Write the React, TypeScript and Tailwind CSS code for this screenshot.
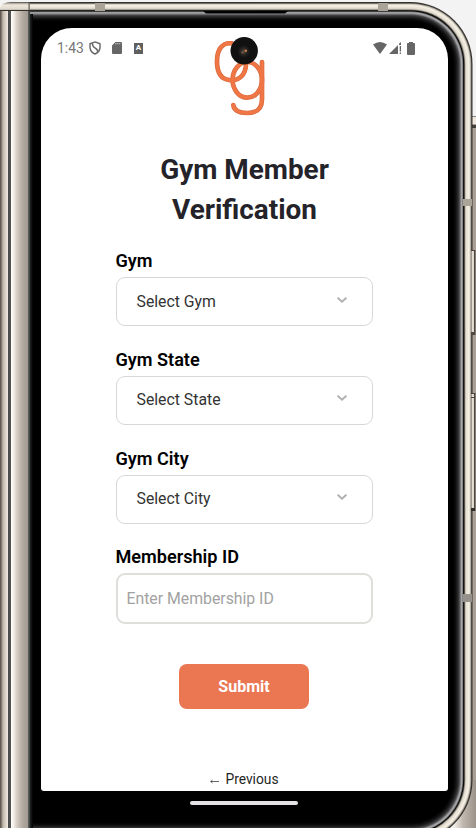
import React from "react";

const rings: [number, string][] = [
  [0, "#34322f"],
  [1.2, "#8d887f"],
  [2, "#d9d3c7"],
  [3, "#f4efe3"],
  [4.6, "#e9e2d6"],
  [6.5, "#cfc8bb"],
  [7.4, "#77736a"],
  [8.2, "#090909"],
  [9.4, "#77777a"],
  [10.2, "#aaaaac"],
  [11.3, "#8a8a8c"],
  [12.2, "#5c5c5e"],
  [13.1, "#3e3e40"],
  [14, "#2c2c2d"],
  [15, "#1e1e1f"],
  [16, "#131313"],
  [17, "#090909"],
  [18.5, "#000000"],
];

function DeviceFrame() {
  return (
    <svg className="absolute inset-0" width="476" height="828" viewBox="0 0 476 828">
      <defs>
        <linearGradient id="hinge" x1="0" y1="0" x2="31" y2="0" gradientUnits="userSpaceOnUse">
          <stop offset="0" stopColor="#514843" />
          <stop offset="0.05" stopColor="#887e75" />
          <stop offset="0.1" stopColor="#c2b8ac" />
          <stop offset="0.19" stopColor="#ded5c9" />
          <stop offset="0.25" stopColor="#eee8df" />
          <stop offset="0.255" stopColor="#494949" />
          <stop offset="0.35" stopColor="#545454" />
          <stop offset="0.355" stopColor="#ffffff" />
          <stop offset="0.43" stopColor="#f6f1eb" />
          <stop offset="0.54" stopColor="#d7cec5" />
          <stop offset="0.72" stopColor="#b3aba1" />
          <stop offset="0.89" stopColor="#a39b92" />
          <stop offset="0.91" stopColor="#62605c" />
          <stop offset="0.95" stopColor="#414746" />
          <stop offset="1" stopColor="#202323" />
        </linearGradient>
        <linearGradient id="cap" x1="0" y1="2" x2="0" y2="12" gradientUnits="userSpaceOnUse">
          <stop offset="0" stopColor="#403d39" />
          <stop offset="0.12" stopColor="#aaa398" />
          <stop offset="0.3" stopColor="#eee8dc" />
          <stop offset="0.7" stopColor="#e0d8cc" />
          <stop offset="0.82" stopColor="#b4aca0" />
          <stop offset="0.85" stopColor="#302e2b" />
          <stop offset="1" stopColor="#302e2b" />
        </linearGradient>
        <linearGradient id="edge" x1="29" y1="0" x2="33" y2="0" gradientUnits="userSpaceOnUse">
          <stop offset="0" stopColor="#4d5352" />
          <stop offset="0.3" stopColor="#202323" />
          <stop offset="1" stopColor="#000000" />
        </linearGradient>
        <linearGradient id="key" x1="471" y1="0" x2="476" y2="0" gradientUnits="userSpaceOnUse">
          <stop offset="0" stopColor="#6d675e" />
          <stop offset="0.25" stopColor="#e6dfd3" />
          <stop offset="0.6" stopColor="#dbd3c7" />
          <stop offset="0.72" stopColor="#302e2b" />
          <stop offset="0.9" stopColor="#807a72" />
          <stop offset="1" stopColor="#aaa098" />
        </linearGradient>
        <linearGradient id="corner" x1="454" y1="0" x2="476" y2="0" gradientUnits="userSpaceOnUse">
          <stop offset="0" stopColor="#f1eee9" />
          <stop offset="0.4" stopColor="#c1b9b0" />
          <stop offset="1" stopColor="#9b9289" />
        </linearGradient>
      </defs>
      <rect width="476" height="828" fill="#f3f3f3" />
      <rect x="466" y="116" width="10" height="712" fill="#aaa098" />
      <rect x="452" y="780" width="24" height="48" fill="url(#corner)" />
      <rect x="471" y="116" width="5" height="1" fill="#888" />
      <rect x="471" y="117" width="5" height="7" fill="#eee8de" />
      <rect x="471" y="125" width="5" height="3" fill="#45413d" />
      {rings.map(([inset, fill]) => (
        <rect
          key={inset}
          x={-100}
          y={2 + inset}
          width={572.5 - inset}
          height={840 - inset * 2}
          rx={62 - inset}
          fill={fill}
        />
      ))}
      <path d="M203 11H288L285 13.5H206Z" fill="#000" />
      <rect x="29" y="14" width="4" height="814" fill="url(#edge)" />
      <rect x="0" y="0" width="30" height="12" fill="#f3f3f3" />
      <path d="M0 8Q2 2 11 2H30V12H0Z" fill="url(#cap)" />
      <rect x="0" y="11" width="30" height="817" fill="url(#hinge)" />
      <rect x="28.6" y="2" width="1" height="10" fill="#44413c" />
      <rect x="95" y="3" width="10" height="8" fill="#aaa398" />
      <rect x="378" y="3" width="10" height="8" fill="#aaa398" />
      <rect x="463" y="199" width="9" height="7" fill="#aaa398" />
      <rect x="463" y="594" width="9" height="8" fill="#96918a" />
      <rect x="471" y="250" width="5" height="85" fill="url(#key)" />
      <rect x="471" y="332" width="4" height="3" fill="#4b4741" />
      <rect x="471" y="250" width="4" height="1" fill="#45413c" />
      <rect x="471" y="393" width="5" height="118" fill="url(#key)" />
      <rect x="471" y="393" width="4" height="1" fill="#45413c" />
      <rect x="471" y="397" width="4" height="1" fill="#45413c" />
      <rect x="471" y="508" width="4" height="3" fill="#302e2a" />
    </svg>
  );
}

function StatusBar() {
  return (
    <header className="flex h-10 shrink-0 items-center justify-between pl-4 pr-8 text-[#666]">
      <div className="flex items-center">
        <span className="w-[32px] text-[13.9px] leading-4 text-[#777]">1:43</span>
        <svg width="12" height="14" viewBox="0 0 12 14" fill="none" stroke="currentColor" strokeWidth="1.4">
          <path d="M6 .9 11 2.8V6.6Q10.7 11 6 13Q1.3 11 1 6.6V2.8Z" />
          <path d="M3.4 2.2Q3.4 5.6 6.3 7.1T8.4 11" />
        </svg>
        <svg className="ml-[11px]" width="10" height="12" viewBox="0 0 10 12" fill="currentColor">
          <path fillRule="evenodd" d="M3.4 0H9Q10 0 10 1V11Q10 12 9 12H1Q0 12 0 11V3.4ZM3.4 1.3V2.3H4.3V1.3ZM5.4 1.3V2.3H6.3V1.3ZM7.4 1.3V2.3H8.3V1.3Z" />
        </svg>
        <span className="ml-3 flex h-[11px] w-[9px] items-center justify-center bg-[#5f5f5f] text-[8px] font-bold leading-none text-white">A</span>
      </div>
      <div className="flex items-center">
        <svg width="14" height="12" viewBox="0 0 14 12" fill="currentColor">
          <path d="M0 2.6Q7-2.6 14 2.6L7 12Z" />
        </svg>
        <svg className="ml-0.5" width="13" height="12" viewBox="0 0 13 12" fill="currentColor">
          <path d="M0 12 9 3V12ZM10 1.7 12 0V3H10ZM10.7 4H12V9.5H10.7ZM10.7 10.5H12V12H10.7Z" />
        </svg>
        <svg className="ml-[5px] mr-px" width="8" height="13" viewBox="0 0 8 13" fill="currentColor">
          <path d="M2 1V0H6V1H7Q8 1 8 2V12Q8 13 7 13H1Q0 13 0 12V2Q0 1 1 1Z" />
        </svg>
      </div>
    </header>
  );
}

function Logo() {
  return (
    <svg className="absolute left-[172px] top-[7px]" width="54" height="84" viewBox="213 35 54 84">
      <defs>
        <radialGradient id="lens">
          <stop offset="0" stopColor="#5f4b3c" />
          <stop offset="0.3" stopColor="#3a302a" />
          <stop offset="0.55" stopColor="#252321" />
          <stop offset="1" stopColor="#111111" />
        </radialGradient>
      </defs>
      <g fill="none" strokeLinecap="round">
        <g stroke="#d96b40" strokeWidth="4.7">
          <path d="M232 43.4C222 42 217 50 217 61C217 72 221 79 229 80C238 82 246 75 246 64" />
          <ellipse cx="247.3" cy="79.8" rx="14.7" ry="17.8" />
          <path d="M262 62V99C262 109 257 113 247 113C239 113 234 110 233.3 105" />
        </g>
        <g stroke="#f07646" strokeWidth="3.3">
          <path d="M232 43.4C222 42 217 50 217 61C217 72 221 79 229 80C238 82 246 75 246 64" />
          <ellipse cx="247.3" cy="79.8" rx="14.7" ry="17.8" />
          <path d="M262 62V99C262 109 257 113 247 113C239 113 234 110 233.3 105" />
        </g>
      </g>
      <circle cx="244.2" cy="50.7" r="13.7" fill="#111" />
      <circle cx="243.8" cy="51.5" r="6.5" fill="url(#lens)" />
      <circle cx="245.8" cy="50.8" r="1.3" fill="#c47c52" />
      <circle cx="242.5" cy="52.5" r="1.2" fill="#6a5842" />
    </svg>
  );
}

function SelectField({ label, value }: { label: string; value: string }) {
  return (
    <section className="h-[98.75px]">
      <h2 className="h-[27px] whitespace-nowrap text-[18.1px] font-semibold leading-[22px] text-black">{label}</h2>
      <button className="flex h-[49px] w-full items-center justify-between rounded-[9px] border border-[#d7d7d7] pl-5 pr-[25px] text-[15.8px] text-[#333]">
        <span>{value}</span>
        <svg className="mb-1" width="10" height="6" viewBox="0 0 10 6" fill="none" stroke="#b0b0b0" strokeWidth="1.9">
          <path d="M.6.7 5 4.7 9.4.7" />
        </svg>
      </button>
    </section>
  );
}

export default function App() {
  return (
    <div className="relative h-[828px] w-[476px] overflow-hidden font-[Roboto,sans-serif]">
      <DeviceFrame />
      <div className="relative pl-[41px] pt-7">
        <main className="relative flex h-[763px] w-[407px] flex-col overflow-hidden rounded-b-[3px] rounded-t-[31px] bg-white">
          <StatusBar />
          <Logo />
          <h1 className="mt-[82px] text-center text-[27.9px] font-bold leading-[39.5px] text-[#242329]">
            Gym Member<br />Verification
          </h1>
          <form className="ml-[74.5px] mt-[21px] w-[257px]" onSubmit={(e) => e.preventDefault()}>
            <SelectField label="Gym" value="Select Gym" />
            <SelectField label="Gym State" value="Select State" />
            <SelectField label="Gym City" value="Select City" />
            <label className="block text-[18.1px] font-semibold leading-[22px] text-black">
              <span className="block h-[27px]">Membership ID</span>
              <input
                className="block h-[51px] w-full rounded-[9px] border-2 border-[#dededb] px-[9px] text-[15.8px] font-normal outline-none placeholder:text-[#a2a2a2]"
                placeholder="Enter Membership ID"
              />
            </label>
            <button className="ml-[63.5px] mt-10 flex h-[45px] w-[130px] items-center justify-center rounded-lg bg-[#ea7652] text-[16px] font-bold text-white">
              Submit
            </button>
          </form>
          <button className="mt-[60px] flex items-center justify-center gap-1.5 text-[13.8px] leading-5 text-[#242424]">
            <svg className="mt-1" width="9" height="5" viewBox="0 0 9 5" fill="none" stroke="currentColor" strokeWidth=".7">
              <path d="M9 2.5H.7M2.5 1 .7 2.5 2.5 4" />
            </svg>
            <span>Previous</span>
          </button>
        </main>
        <div className="ml-[149px] mt-2.5 h-1 w-[108px] rounded-full bg-[#e6e3e6]" />
      </div>
    </div>
  );
}
